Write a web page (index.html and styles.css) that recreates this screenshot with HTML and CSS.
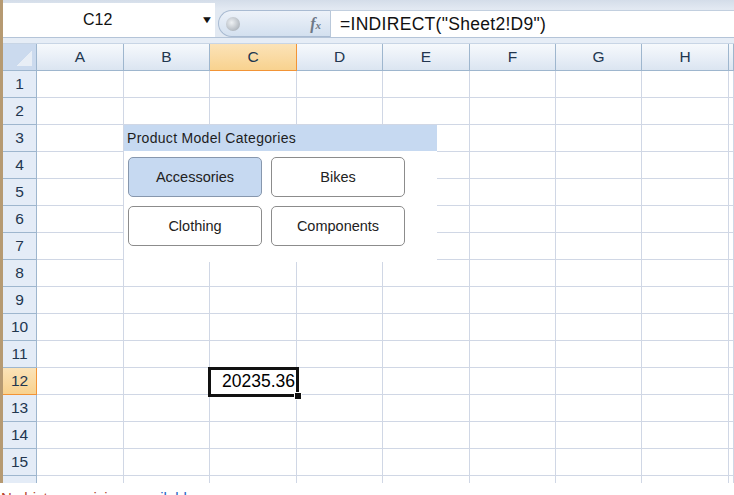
FILE: index.html
```html
<!DOCTYPE html>
<html lang="en">
<head>
<meta charset="UTF-8">
<title>Book1 - Slicer</title>
<meta name="viewport" content="width=device-width, initial-scale=1.0">
<link rel="stylesheet" href="styles.css">
</head>
<body>

<div class="app">

<div class="fbar">
  <div class="namebox"><span class="ref">C12</span><span class="drop">&#9660;</span></div>
  <div class="pill"><span class="knob"></span><span class="fx"><i>f</i><small>x</small></span></div>
  <div class="formula">=INDIRECT("Sheet2!D9")</div>
</div>
<div class="gap"></div>

<div class="sheet">
  <div class="grid">
    <div class="corner"><span class="tri"></span></div><div class="ch">A</div><div class="ch">B</div><div class="ch sel">C</div><div class="ch">D</div><div class="ch">E</div><div class="ch">F</div><div class="ch">G</div><div class="ch">H</div><div class="ch"></div>
    <div class="rh">1</div><div></div><div></div><div></div><div></div><div></div><div></div><div></div><div></div><div></div>
    <div class="rh">2</div><div></div><div></div><div></div><div></div><div></div><div></div><div></div><div></div><div></div>
    <div class="rh">3</div><div></div><div></div><div></div><div></div><div></div><div></div><div></div><div></div><div></div>
    <div class="rh">4</div><div></div><div></div><div></div><div></div><div></div><div></div><div></div><div></div><div></div>
    <div class="rh">5</div><div></div><div></div><div></div><div></div><div></div><div></div><div></div><div></div><div></div>
    <div class="rh">6</div><div></div><div></div><div></div><div></div><div></div><div></div><div></div><div></div><div></div>
    <div class="rh">7</div><div></div><div></div><div></div><div></div><div></div><div></div><div></div><div></div><div></div>
    <div class="rh">8</div><div></div><div></div><div></div><div></div><div></div><div></div><div></div><div></div><div></div>
    <div class="rh">9</div><div></div><div></div><div></div><div></div><div></div><div></div><div></div><div></div><div></div>
    <div class="rh">10</div><div></div><div></div><div></div><div></div><div></div><div></div><div></div><div></div><div></div>
    <div class="rh">11</div><div></div><div></div><div></div><div></div><div></div><div></div><div></div><div></div><div></div>
    <div class="rh sel">12</div><div></div><div></div><div class="val">20235.36</div><div></div><div></div><div></div><div></div><div></div><div></div>
    <div class="rh">13</div><div></div><div></div><div></div><div></div><div></div><div></div><div></div><div></div><div></div>
    <div class="rh">14</div><div></div><div></div><div></div><div></div><div></div><div></div><div></div><div></div><div></div>
    <div class="rh">15</div><div></div><div></div><div></div><div></div><div></div><div></div><div></div><div></div><div></div>
    <div class="rh">16</div><div></div><div></div><div></div><div></div><div></div><div></div><div></div><div></div><div></div>
  </div>

  <!-- slicer floats over the grid -->
  <div class="slicer">
    <div class="slicer-head">Product Model Categories</div>
    <div class="slicer-items">
      <div class="btn on">Accessories</div>
      <div class="btn">Bikes</div>
      <div class="btn">Clothing</div>
      <div class="btn">Components</div>
    </div>
  </div>

  <div class="cursor"><span class="handle"></span></div>
</div>

</div>

<div class="note"><span class="n1">No history revisions</span> <span class="n2">available</span></div>

</body>
</html>
```

FILE: styles.css
```css
body {
    margin: 0;
    font-family: "Liberation Sans", Arial, sans-serif;
    background-color: #fff;
    color: #000;
    overflow: hidden;
}
.app {
    border-left: 3px solid #b69a72;
    height: 483px;
    overflow: hidden;
}

/* formula bar */
.fbar {
    display: flex;
    height: 37px;
    background: linear-gradient(#d4dde9, #e2e9f2 9px, #e2e9f2);
}
.namebox {
    width: 212px;
    margin-top: 3px;
    background-color: #fff;
    display: flex;
    align-items: center;
    position: relative;
}
.ref { font-size: 16px; margin-left: 80px; color: #111; }
.drop {
    position: absolute;
    left: 199px;
    top: 11px;
    font-size: 10px;
    transform: scaleX(1.3);
    color: #111;
}
.pill {
    width: 112px;
    margin-left: 3px;
    margin-top: 10px;
    border-radius: 14px 0 0 14px;
    border: 1px solid #a9bbd2;
    border-right: none;
    background: linear-gradient(#edf2f9, #d3e0ef);
    display: flex;
    align-items: center;
    justify-content: space-between;
    box-sizing: border-box;
}
.knob {
    width: 14px;
    height: 14px;
    margin-left: 7px;
    border-radius: 50%;
    background: radial-gradient(circle at 40% 40%, #eef1f4, #9aa2ab);
}
.fx {
    font-family: "Liberation Serif", serif;
    font-weight: bold;
    color: #6e7886;
    font-size: 16px;
    margin-right: 9px;
}
.fx small { font-size: 11px; font-style: italic; }
.formula {
    flex: 1;
    margin-top: 10px;
    background-color: #fff;
    border-left: 1px solid #b9c8da;
    border-top: 1px solid #c2cfdf;
    padding-left: 9px;
    font-size: 17.5px;
    letter-spacing: 0.3px;
    line-height: 26px;
    color: #111;
}
.gap {
    height: 7px;
    box-sizing: border-box;
    background-color: #e6edf6;
    border-top: 1px solid #b4c4d8;
    border-bottom: 1px solid #c8d5e5;
}

/* sheet */
.sheet { position: relative; height: 439px; overflow: hidden; }
.grid {
    display: grid;
    grid-template-columns: 34px 87px 86px 87px 86px 87px 86px 86px 87px 1fr;
    grid-auto-rows: 27px;
}
.grid > div {
    box-sizing: border-box;
    border-right: 1px solid #d0d7e5;
    border-bottom: 1px solid #d0d7e5;
}
.grid > .ch, .grid > .rh, .grid > .corner {
    border-color: #9eb6ce;
    color: #22364f;
    font-size: 15.5px;
    display: flex;
    align-items: center;
    justify-content: center;
}
.ch { background: linear-gradient(#f6f9fc, #e9eff7 50%, #dbe5f1); }
.rh { background-color: #e4ecf7; }
.grid > .sel {
    background: linear-gradient(#fbe3b8, #f8d28f);
    border-color: #f29436;
}
.corner {
    background-color: #cbdaee;
    align-items: flex-end !important;
    justify-content: flex-end !important;
}
.tri {
    width: 15px;
    height: 16px;
    margin: 0 4px 4px 0;
    background: linear-gradient(to bottom right, transparent 50%, #e8eef6 50%);
}
.val {
    text-align: right;
    font-size: 17.5px;
    line-height: 27px;
    padding-right: 1px;
}

/* slicer */
.slicer {
    position: absolute;
    left: 121px;
    top: 81px;
    width: 313px;
    height: 137px;
    background-color: #fff;
}
.slicer-head {
    height: 26px;
    line-height: 26px;
    background-color: #c6d9f1;
    padding-left: 3px;
    font-size: 14px;
    letter-spacing: 0.3px;
    color: #1d1d1d;
}
.slicer-items {
    display: grid;
    grid-template-columns: 134px 134px;
    grid-auto-rows: 40px;
    gap: 9px;
    padding: 6px 4px;
}
.btn {
    border: 1px solid #8c8c8c;
    border-radius: 5px;
    background-color: #fff;
    font-size: 14.5px;
    color: #222;
    display: flex;
    align-items: center;
    justify-content: center;
}
.btn.on { background-color: #c6d9f1; border-color: #8797ad; }

/* active cell */
.cursor {
    position: absolute;
    left: 205px;
    top: 323px;
    width: 91px;
    height: 30px;
    box-sizing: border-box;
    border: 3px solid #111;
}
.handle {
    position: absolute;
    right: -6px;
    bottom: -6px;
    width: 6px;
    height: 6px;
    background-color: #111;
    border: 1px solid #fff;
}

.note { font-size: 15px; line-height: 17px; margin-top: 6px; padding-left: 1px; white-space: nowrap; }
.n1 { color: #b5462f; }
.n2 { color: #2566c4; }
```
